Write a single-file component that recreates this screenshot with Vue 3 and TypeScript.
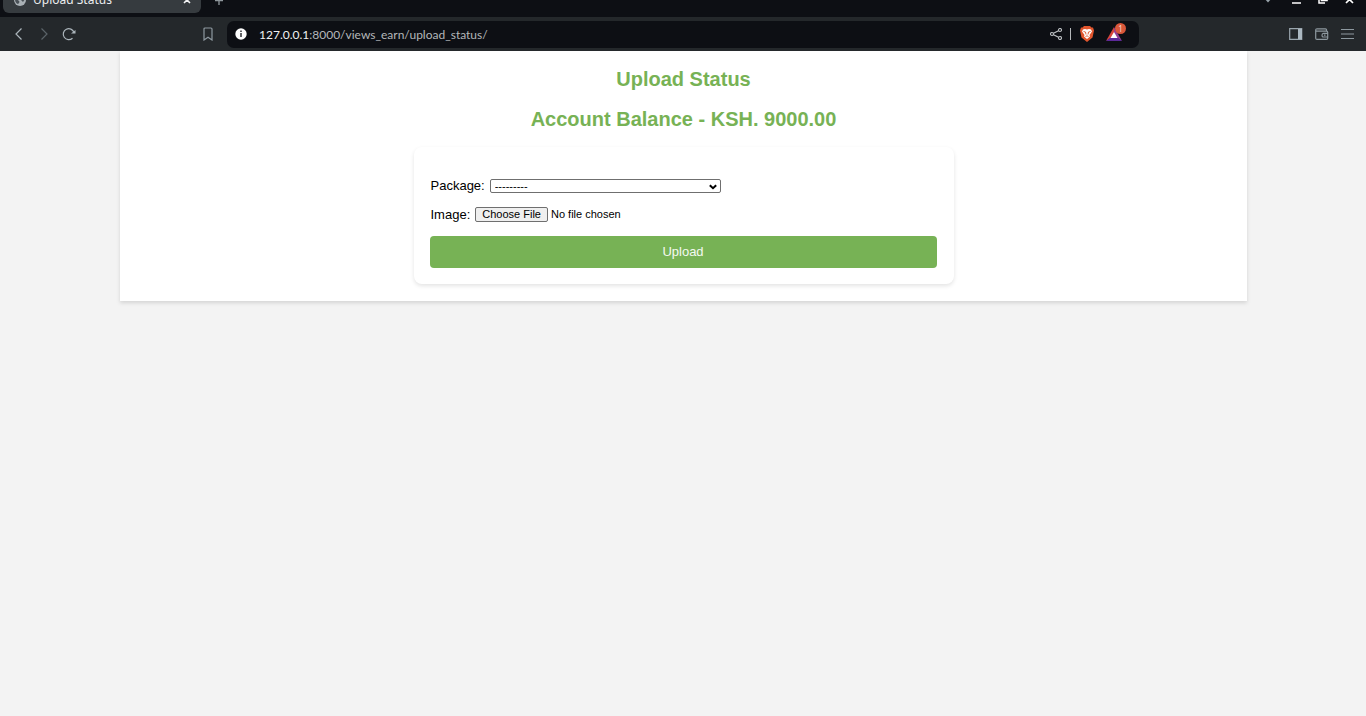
<script setup lang="ts">
import { ref } from 'vue'

const title = 'Upload Status'
const balance = '9000.00'
const selected = ref('')
const host = '127.0.0.1'
const path = ':8000/views_earn/upload_status/'
</script>

<template>
  <div class="browser">
    <header class="chrome">
      <div class="tabs">
        <div class="tab">
          <svg class="globe" width="12" height="12" viewBox="0 0 12 12">
            <circle cx="6" cy="6" r="6" fill="#a9b0b5" />
            <path d="M1 5c2 0 3 1 4 2s0 2-1 3C2 9.500 1 7.500 1 5zM6 3l3-2 2 4-2 3-2-2z" fill="#4a5157" />
          </svg>
          <span class="tab-title">{{ title }}</span>
          <button class="icon" aria-label="Close tab">
            <svg width="8" height="8" viewBox="0 0 8 8"><path d="M1 1l6 6M7 1L1 7" stroke="#f2f3f4" stroke-width="1.600" /></svg>
          </button>
        </div>
        <button class="icon plus" aria-label="New tab">
          <svg width="10" height="10" viewBox="0 0 10 10"><path d="M5 1v9M1 5.500h8" stroke="#8f979c" stroke-width="1.300" /></svg>
        </button>
        <div class="window-buttons">
          <button class="icon" aria-label="Search tabs">
            <svg width="12" height="12" viewBox="0 0 12 12"><path d="M2 5h8L6 9.500z" fill="#98a3ab" /></svg>
          </button>
          <button class="icon" aria-label="Minimize">
            <svg width="10" height="12" viewBox="0 0 10 12"><path d="M1 10h9" stroke="#fff" stroke-width="1.500" /></svg>
          </button>
          <button class="icon" aria-label="Restore">
            <svg width="10" height="12" viewBox="0 0 10 12"><path d="M3.500 1h5.500v6.500H3.500z" fill="none" stroke="#fff" stroke-width="1.600" /><path d="M1 4v6h6" fill="none" stroke="#fff" stroke-width="1.500" /></svg>
          </button>
          <button class="icon" aria-label="Close">
            <svg width="10" height="12" viewBox="0 0 10 12"><path d="M1 3l7 7M8 3l-7 7" stroke="#fff" stroke-width="1.700" /></svg>
          </button>
        </div>
      </div>
      <nav class="toolbar">
        <div class="history">
          <button class="icon" aria-label="Back">
            <svg width="14" height="14" viewBox="0 0 14 14"><path d="M9.500 1.500L4 7l5.500 5.500" fill="none" stroke="#abb5bb" stroke-width="1.200" /></svg>
          </button>
          <button class="icon" aria-label="Forward">
            <svg width="14" height="14" viewBox="0 0 14 14"><path d="M4.500 1.500L10 7l-5.500 5.500" fill="none" stroke="#5b6469" stroke-width="1.200" /></svg>
          </button>
          <button class="icon" aria-label="Reload">
            <svg width="14" height="14" viewBox="0 0 14 14"><path d="M10.500 11.200A5.500 5.500 0 1 1 12 5.500" fill="none" stroke="#abb5bb" stroke-width="1.200" /><path d="M9 6.500h4.500V3z" fill="#abb5bb" /></svg>
          </button>
        </div>
        <button class="icon bookmark" aria-label="Bookmark">
          <svg width="10" height="14" viewBox="0 0 10 14"><path d="M1 2q0-1 1-1h6q1 0 1 1v11L5 10.200 1 13z" fill="none" stroke="#8d989f" stroke-width="1.200" /></svg>
        </button>
        <div class="address">
          <svg width="12" height="12" viewBox="0 0 12 12"><circle cx="6" cy="6" r="5.700" fill="#fff" /><path d="M6 2.500v1.500M6 5v4" stroke="#101217" stroke-width="1.300" /></svg>
          <span class="url"><b>{{ host }}</b>{{ path }}</span>
          <button class="icon share" aria-label="Share">
            <svg width="12" height="12" viewBox="0 0 12 12" fill="none" stroke="#c0c4c7" stroke-width="1.100"><circle cx="2" cy="6" r="1.500" /><circle cx="10" cy="2" r="1.500" /><circle cx="10" cy="10" r="1.500" /><path d="M3.500 5.300l5-2.600M3.500 6.700l5 2.600" /></svg>
          </button>
          <i class="divider"></i>
          <button class="icon" aria-label="Shields">
            <svg width="14" height="16" viewBox="0 0 14 16"><path d="M4 0h6l1.500 1.500h1.500l1 3-1.500 7L7 16l-5.500-4.500L0 4.500l1-3h1.500z" fill="#e0552d" /><path d="M3 3.500l2-.5 2 .5 2-.5 2 .5 1 2-2.500 3.500L10 10.500 7 13l-3-2.500.5-1.500L2 5.500z" fill="#fff" /><path d="M3.500 5.500l2 .5.5 2.500M10.500 5.500l-2 .5-.5 2.500M5.500 10.500L7 9.800l1.500.7" fill="none" stroke="#e0552d" stroke-width=".9" /></svg>
          </button>
          <button class="icon rewards" aria-label="Rewards">
            <svg width="16" height="14" viewBox="0 0 16 14"><path d="M8 0L0 14l8-5z" fill="#d6453a" /><path d="M8 0l8 14-8-5z" fill="#943e91" /><path d="M0 14h16L8 8z" fill="#5b2999" /><path d="M8 5l3.500 6h-7z" fill="#fff" /></svg>
            <span class="badge">1</span>
          </button>
        </div>
        <div class="tools">
          <button class="icon" aria-label="Sidebar">
            <svg width="14" height="12" viewBox="0 0 14 12"><path d="M.7.700h12v10.600H.7z" fill="none" stroke="#9aa6ae" stroke-width="1.200" /><path d="M9 1h4v10H9z" fill="#abb8c1" /></svg>
          </button>
          <button class="icon" aria-label="Wallet">
            <svg width="14" height="12" viewBox="0 0 14 12" fill="none" stroke="#8d989f" stroke-width="1.200"><path d="M11.500 3V1.800q0-1-1-1H2q-1.300 0-1.300 1.200T2 3.200h9.500q1.200 0 1.200 1v6q0 1.200-1.200 1.200H2q-1.300 0-1.300-1.200V2M13 5.300H8.500q-1.500 0-1.500 1.900T8.500 9H13M9 7.200h1.500" /></svg>
          </button>
          <button class="icon" aria-label="Menu">
            <svg width="14" height="12" viewBox="0 0 14 12"><path d="M0 1.500h13M0 6h13M0 10.500h13" stroke="#8d989f" stroke-width="1.200" /></svg>
          </button>
        </div>
      </nav>
    </header>

    <main class="page">
      <section class="container">
        <h1>{{ title }}</h1>
        <h2>Account Balance - KSH. {{ balance }}</h2>
        <form class="card" @submit.prevent>
          <div class="field">
            <label for="package">Package:</label>
            <div class="select">
              <select id="package" v-model="selected">
                <option value="">---------</option>
              </select>
              <svg class="arrow" width="8" height="6" viewBox="0 0 8 6"><path d="M.8 1.200L4 4.200l3.200-3" fill="none" stroke="#000" stroke-width="2" /></svg>
            </div>
          </div>
          <div class="field">
            <label for="image">Image:</label>
            <input id="image" type="file" />
          </div>
          <button class="upload" type="submit">Upload</button>
        </form>
      </section>
    </main>
  </div>
</template>

<style>
body {
  background: #f3f3f3;
}
</style>

<style scoped>
* {
  box-sizing: border-box;
}
.browser {
  font-family: "Liberation Sans", Arial, sans-serif;
}
.chrome {
  font-family: "Noto Sans", sans-serif;
  font-size: 12px;
}
.icon {
  display: flex;
  align-items: center;
  justify-content: center;
  padding: 0;
  border: 0;
  background: none;
  position: relative;
}
.tabs {
  height: 17px;
  padding: 0 11px 4px 3px;
  display: flex;
  align-items: flex-end;
  background: #0d0f14;
  overflow: hidden;
}
.tab {
  width: 198px;
  height: 27px;
  flex: none;
  display: flex;
  align-items: center;
  padding: 0 10px 0 11px;
  border-radius: 6px;
  background: #363b3f;
  color: #eceeef;
}
.tab-title {
  flex: 1;
  margin-left: 7px;
}
.plus {
  height: 27px;
  margin-left: 13px;
}
.window-buttons {
  height: 28px;
  display: flex;
  align-items: center;
  gap: 17px;
  margin-left: auto;
}
.toolbar {
  height: 34px;
  display: flex;
  align-items: center;
  padding: 0 11px 0 12px;
  background: #24282b;
}
.history {
  display: flex;
  gap: 11px;
}
.bookmark {
  margin-left: 127px;
}
.address {
  flex: 0 1 912px;
  height: 27px;
  margin-left: 14px;
  padding: 0 17px 0 8px;
  display: flex;
  align-items: center;
  border-radius: 7px;
  background: #0d0f14;
}
.url {
  flex: 1;
  margin-left: 12px;
  color: #b4b7ba;
  font-family: Lato, "Noto Sans", sans-serif;
}
.url b {
  color: #f0f1f2;
  font-weight: 400;
}
.divider {
  width: 1px;
  height: 12px;
  margin: 0 9px 0 8px;
  background: #b4b7ba;
}
.rewards {
  margin-left: 12px;
}
.badge {
  position: absolute;
  top: -4px;
  right: -4px;
  width: 11px;
  height: 11px;
  border-radius: 50%;
  background: #d9573a;
  color: #f5d5cc;
  font: 8px/11px "Noto Sans", sans-serif;
  text-align: center;
}
.tools {
  display: flex;
  gap: 12px;
  margin-left: auto;
}
.page {
  overflow: hidden;
  padding: 0 119px 20px 120px;
}
.container {
  padding: 16px 16px 17px;
  background: #fff;
  box-shadow: 0 2px 4px rgba(0, 0, 0, 0.13);
}
h1,
h2 {
  margin: 0 0 16px;
  color: #77b255;
  font-size: 20px;
  line-height: 24px;
  font-weight: 700;
  text-align: center;
}
.card {
  max-width: 540px;
  margin: 0 auto;
  padding: 31px 17px 16px 16px;
  border-radius: 8px;
  background: #fff;
  box-shadow: 0 2px 4px rgba(0, 0, 0, 0.11);
}
.field {
  display: flex;
  align-items: center;
  gap: 5px;
  height: 15px;
  margin-bottom: 14px;
  padding-left: 1px;
  font-size: 13px;
}
.select {
  position: relative;
  display: flex;
}
select {
  appearance: none;
  width: 231px;
  height: 14px;
  padding: 0 4px;
  border: 1px solid #6f6f6f;
  border-radius: 2px;
  background: #fff;
  color: #000;
  font: 11px/12px "Liberation Sans", Arial, sans-serif;
}
.arrow {
  position: absolute;
  right: 4px;
  top: 5px;
  pointer-events: none;
}
input[type="file"] {
  height: 15px;
  padding: 0;
  font: 11px/15px "Liberation Sans", Arial, sans-serif;
}
input[type="file"]::file-selector-button {
  height: 15px;
  margin: 0 3px 0 0;
  padding: 0 6px;
  border: 1px solid #6f6f6f;
  border-radius: 2px;
  background: #efefef;
  color: #000;
  font: 11px/13px "Liberation Sans", Arial, sans-serif;
}
.upload {
  display: block;
  width: 100%;
  height: 32px;
  border: 0;
  border-radius: 4px;
  background: #77b255;
  color: #f4f9f1;
  font: 13px/16px "Liberation Sans", Arial, sans-serif;
}
</style>
